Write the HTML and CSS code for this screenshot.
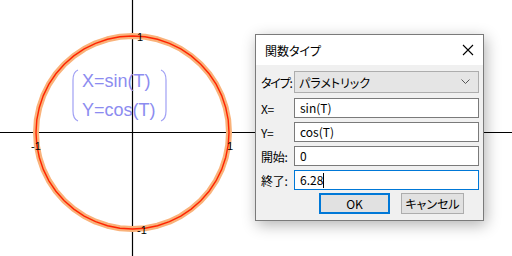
FILE: index.html
```html
<!DOCTYPE html>
<html lang="ja">
<head>
  <meta charset="UTF-8" />
  <title>関数タイプ</title>
  <link rel="stylesheet" href="styles.css">
</head>
<body>
  <div class="stage">

    <!-- Graph canvas -->
    <svg class="graph" width="512" height="256" viewBox="0 0 512 256">
      <line x1="132.5" y1="0" x2="132.5" y2="256" class="axis" />
      <line x1="0" y1="132.5" x2="512" y2="132.5" class="axis" />
      <polygon id="curveHalo" class="halo" points="" />
      <polygon id="curveLine" class="curve" points="" />
      <text x="137" y="41" class="tick">1</text>
      <text x="31" y="150" class="tick">-1</text>
      <text x="227" y="150" class="tick">1</text>
      <text x="137" y="234" class="tick">-1</text>
      <path class="paren" d="M78 70 Q73 72 73 80 L73 111 Q73 119 78 121" />
      <path class="paren" d="M161 70 Q166 72 166 80 L166 111 Q166 119 161 121" />
      <text x="82" y="87" class="expr">X=sin(T)</text>
      <text x="82" y="116" class="expr">Y=cos(T)</text>
    </svg>

    <!-- Dialog window -->
    <div class="dialog">
      <div class="titlebar">
        <span class="title">関数タイプ</span>
        <svg class="close" width="12" height="12" viewBox="0 0 12 12">
          <path d="M1 1 L11 11 M11 1 L1 11" />
        </svg>
      </div>
      <div class="form">
        <div class="row row-select">
          <label class="tight">タイプ:</label>
          <div class="select">
            <span>パラメトリック</span>
            <svg width="9" height="6" viewBox="0 0 9 6"><path d="M0.5 0.5 L4.5 4.5 L8.5 0.5" /></svg>
          </div>
        </div>
        <div class="row">
          <label>X=</label>
          <div class="input">sin(T)</div>
        </div>
        <div class="row">
          <label>Y=</label>
          <div class="input">cos(T)</div>
        </div>
        <div class="row">
          <label>開始:</label>
          <div class="input">0</div>
        </div>
        <div class="row">
          <label>終了:</label>
          <div class="input focused">6.28<span class="caret"></span></div>
        </div>
        <div class="buttons">
          <button class="btn default">OK</button>
          <button class="btn">キャンセル</button>
        </div>
      </div>
    </div>

  </div>

  <script>
    // sample the parametric curve x=sin(t), y=cos(t)
    const cx = 132.5, cy = 132.5, r = 96.5;
    const pts = [];
    for (let i = 0; i < 48; i++) {
      const t = i / 48 * Math.PI * 2;
      pts.push((cx + r * Math.sin(t)).toFixed(1) + "," + (cy - r * Math.cos(t)).toFixed(1));
    }
    document.getElementById("curveHalo").setAttribute("points", pts.join(" "));
    document.getElementById("curveLine").setAttribute("points", pts.join(" "));
  </script>
</body>
</html>
```

FILE: styles.css
```css
* {
  margin: 0;
  padding: 0;
  box-sizing: border-box;
}

body {
  background: white;
  font-family: "Noto Sans CJK JP", "Noto Sans", sans-serif;
}

.stage {
  position: relative;
  width: 512px;
  height: 256px;
  overflow: hidden;
}

.graph {
  display: block;
}

.axis {
  stroke: #000;
  stroke-width: 1.2;
}

.halo {
  fill: none;
  stroke: #f9b27a;
  stroke-width: 6;
  stroke-linejoin: round;
}

.curve {
  fill: none;
  stroke: #ff2400;
  stroke-width: 1.4;
}

.tick {
  font-family: "Liberation Sans", sans-serif;
  font-size: 11px;
  fill: #000;
}

.expr {
  font-family: "Liberation Sans", sans-serif;
  font-size: 18px;
  fill: #8c8cf0;
}

.paren {
  fill: none;
  stroke: #a0a0f4;
  stroke-width: 1.2;
}

.dialog {
  position: absolute;
  left: 255px;
  top: 34px;
  width: 229px;
  height: 187px;
  background: #f0f0f0;
  border: 1px solid #7a7a7a;
  box-shadow: 2px 4px 14px rgba(0, 0, 0, 0.3);
  font-size: 12px;
  color: #000;
  font-feature-settings: "palt";
}

.titlebar {
  height: 30px;
  background: white;
  display: flex;
  align-items: center;
  justify-content: space-between;
  padding: 0 9px 0 9px;
}

.title {
  font-size: 12px;
}

.close path {
  stroke: #000;
  stroke-width: 1.1;
}

.form {
  padding: 6px 4px 0 5px;
  display: flex;
  flex-direction: column;
  gap: 4px;
}

.row {
  display: flex;
  align-items: center;
  height: 20px;
}

.row-select {
  height: 22px;
  margin-bottom: 1px;
}

.row label {
  width: 33px;
  flex: none;
  white-space: nowrap;
  letter-spacing: -0.3px;
}

.row label.tight {
  letter-spacing: -1.2px;
}

.select {
  flex: 1;
  height: 22px;
  background: #e5e5e5;
  border: 1px solid #adadad;
  display: flex;
  align-items: center;
  justify-content: space-between;
  padding: 0 8px 0 4px;
}

.select path {
  fill: none;
  stroke: #555;
  stroke-width: 1;
}

.input {
  flex: 1;
  height: 20px;
  background: white;
  border: 1px solid #7a7a7a;
  padding: 0 5px;
  line-height: 18px;
  display: flex;
  align-items: center;
}

.input.focused {
  border-color: #0078d7;
}

.caret {
  width: 1px;
  height: 15px;
  background: #000;
}

.buttons {
  display: flex;
  gap: 11px;
  padding-left: 58px;
  margin-top: -1px;
}

.btn {
  height: 21px;
  background: #e1e1e1;
  border: 1px solid #adadad;
  font-family: inherit;
  font-size: 12px;
  font-feature-settings: "palt";
  color: #000;
}

.btn.default {
  width: 71px;
  border: 2px solid #0078d7;
}

.btn:not(.default) {
  width: 63px;
}
```
